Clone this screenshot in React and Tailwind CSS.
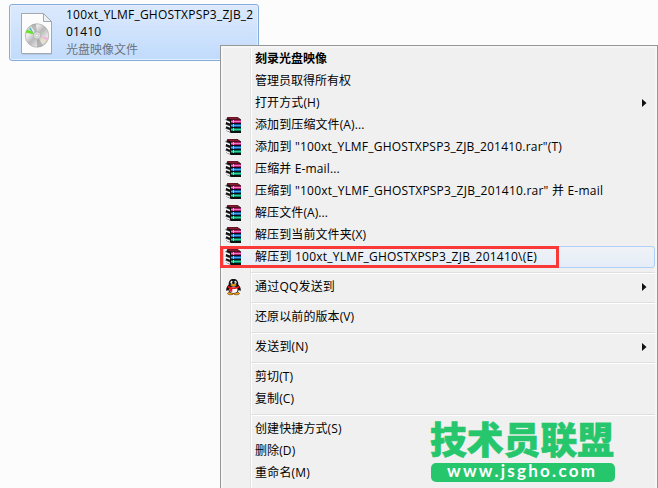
const FONT = "font-['Open_Sans','Noto_Sans_CJK_SC',sans-serif]";

function Books() {
  return (
    <svg width="18" height="18" viewBox="0 0 18 18">
      <path d="M2.500 1h10l3.500 2.500v13.500H6L1 14.500V11l.5-1L1 9V5l.5-2z" fill="#101010" />
      <path d="M2.500 1.200H12l3.800 2.300H6.300L2 2.300z" fill="#8a1830" />
      <path d="M0 3.500 5 5.500v1.900L0 5.400zM0 7.900l5 2v1.900l-5-2zM0 12.100l5 2v1.900l-5-2z" fill="#fafafa" />
      <path d="M0 3.500 5 5.500M0 7.900l5 2M0 12.100l5 2" stroke="#333" strokeWidth=".5" />
      <g shapeRendering="crispEdges">
        <path d="M6 4h10v1H6z" fill="#a81a62" />
        <path d="M6 5h10v1H6z" fill="#f078bd" />
        <path d="M6 6h10v1H6z" fill="#b0187a" />
        <path d="M6 8h10v1H6z" fill="#0d5298" />
        <path d="M6 9h10v1H6z" fill="#45a8ee" />
        <path d="M6 10h10v1H6z" fill="#0d5aa6" />
        <path d="M6 12h10v1H6z" fill="#087453" />
        <path d="M6 13h10v1H6z" fill="#2fcf9c" />
        <path d="M6 14h10v1H6z" fill="#0a8560" />
        <path d="M8 4h1v3H8zM8 8h1v3H8zM8 12h1v3H8z" fill="#e8d020" />
      </g>
    </svg>
  );
}

function Penguin() {
  return (
    <svg width="18" height="18" viewBox="0 0 18 18">
      <ellipse cx="5.5" cy="15.500" rx="3" ry="1.300" fill="#f4a010" stroke="#3b1b00" strokeWidth=".5" />
      <ellipse cx="11.500" cy="15.500" rx="3" ry="1.300" fill="#f4a010" stroke="#3b1b00" strokeWidth=".5" />
      <path d="M8.500 1C5.300 1 3.500 3 3.700 6.500 2 8.500.8 10.500 1.300 12.500c.4 1 1.300-.2 1.800-.8C4 14.500 6 15.500 8.500 15.500s4.500-1 5.400-3.800c.5.600 1.400 1.800 1.800.8.5-2-.7-4-2.400-6C13.500 3 11.700 1 8.500 1Z" fill="#111" />
      <ellipse cx="8.500" cy="11.800" rx="4" ry="3.300" fill="#fff" />
      <ellipse cx="6.700" cy="4.200" rx="1.200" ry="1.500" fill="#fff" />
      <ellipse cx="10.300" cy="4.200" rx="1.200" ry="1.500" fill="#fff" />
      <path d="M6.900 3.700h1v1.300h-1zM9.300 3.700h1v1.300h-1z" fill="#111" />
      <ellipse cx="8.500" cy="6.900" rx="3.200" ry="1" fill="#f5a40b" />
      <path d="M3.300 7.700c3.200 2 7.200 2 10.400 0l.5 1.900c-2 1.200-4.400 1.600-6.900 1.500v2.700H5.100v-3l-2.300-1z" fill="#e8151b" />
    </svg>
  );
}

function DiscFile() {
  return (
    <svg width="34" height="44" viewBox="0 0 34 44">
      <defs>
        <linearGradient id="disc" x1="0" y1="0" x2="1" y2="1">
          <stop offset="0" stopColor="#b5b5b5" />
          <stop offset=".3" stopColor="#eeeeee" />
          <stop offset=".5" stopColor="#b8b8b8" />
          <stop offset=".75" stopColor="#e8e8e8" />
          <stop offset="1" stopColor="#999" />
        </linearGradient>
      </defs>
      <path d="M2 2h22l8 8v32.500H2z" fill="#7c8a9c" opacity=".45" />
      <path d="M1.500 1.500h22l8 8v32h-30z" fill="#fcfcfc" stroke="#a2a8af" />
      <path d="M23.500 1.500v8h8z" fill="#edf0f3" stroke="#a2a8af" />
      <circle cx="17" cy="23.500" r="11.800" fill="url(#disc)" stroke="#a0a0a0" strokeWidth=".6" />
      <path d="M17 23.500 11 13.500a12 12 0 0 1 5-1.700z" fill="#999" opacity=".6" />
      <path d="M17 23.500 23 33.500a12 12 0 0 1-6 1.500z" fill="#929292" opacity=".6" />
      <path d="m14 22.500-8.200-2 1.200-2.700 5 1.500z" fill="#68e524" />
      <path d="m14 22-5-5.200 1.500-1.200z" fill="#55bbb5" />
      <path d="m20 24.500 8 .8-1.300 3.500z" fill="#eeb9d8" />
      <path d="m20 25.500 6 4-1.500 1.500z" fill="#e8e2a2" />
      <circle cx="17" cy="23.500" r="3.700" fill="#ddd" stroke="#aaa" strokeWidth=".7" />
      <circle cx="17" cy="23.500" r="1.300" fill="#fff" stroke="#aaa" strokeWidth=".5" />
    </svg>
  );
}

function Item({ icon, arrow, hot, bold, children, spacing = "tracking-[0.1px]" }) {
  return (
    <div className={`mx-[2px] flex h-[22px] items-center rounded-[3px] border ${hot ? "border-[#aecff7] bg-linear-to-b from-[#eff2f6] to-[#e6edf7]" : "border-transparent"}`}>
      <div className="flex w-[31px] shrink-0 pl-px">
        {icon === "rar" && <Books />}
        {icon === "qq" && <Penguin />}
      </div>
      <div className={`grow whitespace-pre leading-[20px] ${bold ? "font-bold" : ""} ${spacing}`}>{children}</div>
      {arrow && <svg className="mr-[7px]" width="5" height="8" viewBox="0 0 5 8"><path d="M0 0 4.500 4 0 8z" fill="#111" /></svg>}
    </div>
  );
}

function Separator() {
  return (
    <div className="h-2 pl-[30px] pr-[2px] pt-[4px]">
      <div className="h-[2px] border-b border-white bg-[#dfdfdf]" />
    </div>
  );
}

export default function App() {
  return (
    <main className={`relative h-[488px] w-[658px] overflow-hidden bg-[#fcfcfc] text-[12px] text-black ${FONT}`}>
      <div className="pl-[9px] pt-[4px]">
        <div className="flex h-[57px] w-[250px] rounded-[3px] border border-[#84acdd] bg-linear-to-b from-[#dce9fc] to-[#c1dbfc] pl-[10px] shadow-[inset_0_0_0_1px_#e5f0ff]">
          <div className="pt-[7px]"><DiscFile /></div>
          <div className="pl-[12px] pt-[1px] leading-[17px]">
            <div className="whitespace-nowrap tracking-[0.21px]">100xt_YLMF_GHOSTXPSP3_ZJB_2</div>
            <div className="tracking-[0.21px]">01410</div>
            <div className="pt-px text-[#6d7480]">光盘映像文件</div>
          </div>
        </div>
      </div>

      <div className="absolute left-[220px] top-[45px] h-[460px] w-[438px] border border-[#979797] bg-[#f0f0f0] pt-[2px] shadow-[inset_0_0_0_2px_#f6f6f6]">
        <div className="absolute bottom-0 left-[29px] top-[2px] w-[2px] border-r border-white bg-[#e2e3e3]" />
        <div className="relative">
          <Item bold spacing="tracking-normal">刻录光盘映像</Item>
          <Item spacing="tracking-normal">管理员取得所有权</Item>
          <Item arrow>打开方式(H)</Item>
          <Item icon="rar">添加到压缩文件(A)...</Item>
          <Item icon="rar" spacing="tracking-[0.2px]">添加到 "100xt_YLMF_GHOSTXPSP3_ZJB_201410.rar"(T)</Item>
          <Item icon="rar" spacing="tracking-[0.15px]">压缩并 E-mail...</Item>
          <Item icon="rar" spacing="tracking-[0.22px]">压缩到 "100xt_YLMF_GHOSTXPSP3_ZJB_201410.rar" 并 E-mail</Item>
          <Item icon="rar">解压文件(A)...</Item>
          <Item icon="rar">解压到当前文件夹(X)</Item>
          <Item icon="rar" hot spacing="tracking-[0.22px]">解压到 100xt_YLMF_GHOSTXPSP3_ZJB_201410\(E)</Item>
          <Separator />
          <Item icon="qq" arrow spacing="tracking-[0.2px]">通过QQ发送到</Item>
          <Separator />
          <Item>还原以前的版本(V)</Item>
          <Separator />
          <Item arrow spacing="tracking-[0.2px]">发送到(N)</Item>
          <Separator />
          <Item>剪切(T)</Item>
          <Item>复制(C)</Item>
          <Separator />
          <Item>创建快捷方式(S)</Item>
          <Item>删除(D)</Item>
          <Item spacing="tracking-[0.2px]">重命名(M)</Item>
        </div>
      </div>

      <div className="absolute left-[220px] top-[246px] h-[22px] w-[339px] border-3 border-[#fb3838]" />

      <svg className="absolute left-[428px] top-[408px] overflow-visible" width="192" height="78" viewBox="0 -8 192 78">
        <text x="2" y="37.500" textLength="184" lengthAdjust="spacingAndGlyphs" fontFamily="'Noto Sans CJK SC', sans-serif" fontSize="37" fontWeight="900" fill="#26c66d" stroke="#26c66d" strokeWidth=".6">技术员联盟</text>
        <rect x="3" y="47" width="184" height="19" rx="5" fill="#26c66d" />
        <text x="19" y="61" textLength="148" fontFamily="Lato, sans-serif" fontSize="17" fontWeight="700" fill="#fff">www.jsgho.com</text>
      </svg>
    </main>
  );
}
